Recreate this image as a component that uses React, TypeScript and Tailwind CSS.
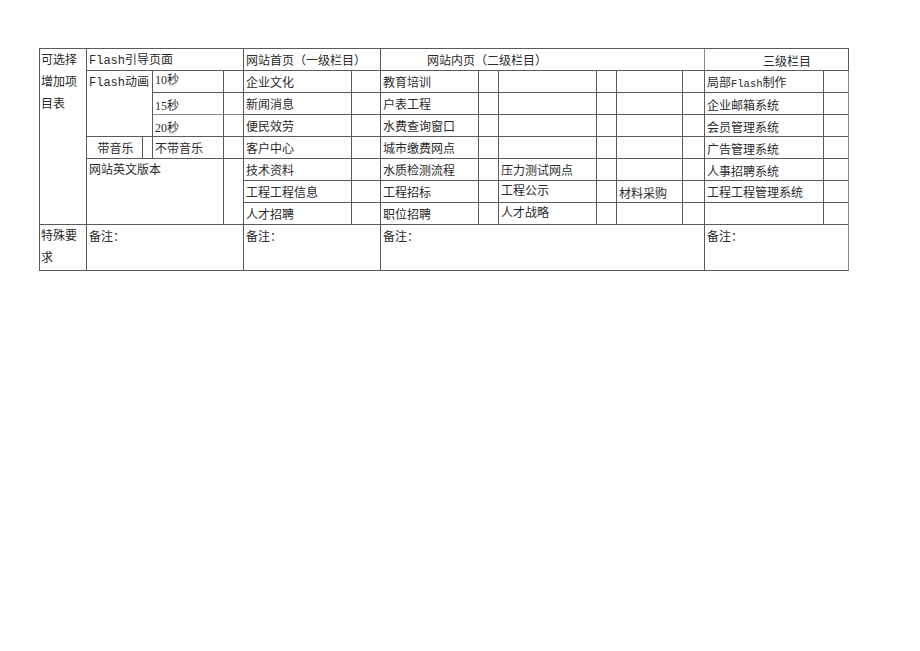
import React from "react";

const cols = ["col-[6/7]", "col-[7/8]", "col-[8/9]", "col-[9/10]", "col-[10/11]", "col-[11/12]", "col-[12/13]", "col-[13/14]", "col-[14/15]", "col-[15/16]"];
const rows = ["row-[2/3]", "row-[3/4]", "row-[4/5]", "row-[5/6]", "row-[6/7]", "row-[7/8]", "row-[8/9]"];

// five named columns per row, each followed by an empty narrow cell
const body: string[][] = [
  ["企业文化", "教育培训", "", "", "局部Flash制作"],
  ["新闻消息", "户表工程", "", "", "企业邮箱系统"],
  ["便民效劳", "水费查询窗口", "", "", "会员管理系统"],
  ["客户中心", "城市缴费网点", "", "", "广告管理系统"],
  ["技术资料", "水质检测流程", "压力测试网点", "", "人事招聘系统"],
  ["工程工程信息", "工程招标", "工程公示", "材料采购", "工程工程管理系统"],
  ["人才招聘", "职位招聘", "人才战略", "", ""],
];

function Flash({ small }: { small?: boolean }) {
  return <span className={`font-['Liberation_Mono',monospace] ${small ? "text-[10.5px]" : "text-[12px]"}`}>Flash</span>;
}

function label(t: string) {
  if (t.includes("Flash")) {
    const [a, b] = t.split("Flash");
    return (
      <>
        {a}
        <Flash small />
        {b}
      </>
    );
  }
  return t;
}

const cell = "border-r border-b border-[#5a5a5a] pl-[2px] overflow-hidden whitespace-nowrap";

export default function App() {
  return (
    <div className="w-[920px] h-[651px] bg-white pt-[48px] pl-[39px] font-['Liberation_Serif','Noto_Sans_CJK_SC',serif] text-[12px] text-[#2a2a2a]">
      <div className="grid grid-cols-[47px_56px_10px_71px_20px_108px_29px_98px_20px_98px_20px_66px_22px_119px_25px] grid-rows-[22px_22px_22px_22px_22px_22px_22px_22px_46px] w-fit border-l border-t border-[#5a5a5a]">
        {/* header */}
        <div className={`col-[1/2] row-[1/9] border-r border-b border-[#5a5a5a] pl-[1px] leading-[22px] whitespace-normal break-all`}>
          可选择
          <br />
          增加项
          <br />
          目表
        </div>
        <div className={`${cell} col-[2/6] row-[1/2] leading-[22px]`}>
          <Flash />
          引导页面
        </div>
        <div className={`${cell} col-[6/8] row-[1/2] leading-[24px]`}>网站首页（一级栏目）</div>
        <div className={`${cell} col-[8/14] row-[1/2] leading-[24px] pl-[46px] border-r-[#8a8a8a]`}>网站内页（二级栏目）</div>
        <div className={`${cell} col-[14/16] row-[1/2] leading-[26px] pl-[58px]`}>三级栏目</div>

        {/* flash block */}
        <div className={`${cell} col-[2/4] row-[2/5] leading-[20px] pt-[1px]`}>
          <Flash />
          动画
        </div>
        <div className={`${cell} col-[4/5] row-[2/3] leading-[18px]`}>10秒</div>
        <div className={`${cell} col-[5/6] row-[2/3]`}></div>
        <div className={`${cell} col-[4/5] row-[3/4] leading-[26px] border-b-[#8a8a8a]`}>15秒</div>
        <div className={`${cell} col-[5/6] row-[3/4] border-b-[#8a8a8a]`}></div>
        <div className={`${cell} col-[4/5] row-[4/5] leading-[26px]`}>20秒</div>
        <div className={`${cell} col-[5/6] row-[4/5]`}></div>
        <div className={`${cell} col-[2/3] row-[5/6] leading-[24px] text-center pl-0`}>带音乐</div>
        <div className={`${cell} col-[3/4] row-[5/6]`}></div>
        <div className={`${cell} col-[4/5] row-[5/6] leading-[24px]`}>不带音乐</div>
        <div className={`${cell} col-[5/6] row-[5/6]`}></div>
        <div className={`${cell} col-[2/5] row-[6/9] leading-[22px]`}>网站英文版本</div>
        <div className={`${cell} col-[5/6] row-[6/9]`}></div>

        {/* main body */}
        {body.map((r, ri) =>
          r.flatMap((t, ci) => [
            <div
              key={`${ri}-${ci}`}
              className={`${cell} ${cols[ci * 2]} ${rows[ri]} ${ri === 5 && ci === 3 ? "leading-[26px]" : ri >= 5 && ci === 2 ? "leading-[20px]" : ci === 4 && ri < 5 && ri > 0 ? "leading-[26px]" : "leading-[24px]"} ${ci === 0 ? "" : ""}`}
            >
              {label(t)}
            </div>,
            <div
              key={`${ri}-${ci}-e`}
              className={`${cell} ${cols[ci * 2 + 1]} ${rows[ri]} ${ci === 1 ? "" : ""} ${ci === 4 ? "border-r-[#8a8a8a]" : ""}`}
            ></div>,
          ])
        )}

        {/* remarks */}
        <div className={`col-[1/2] row-[9/10] border-r border-b border-[#5a5a5a] pl-[1px] leading-[22px] whitespace-normal break-all`}>特殊要求</div>
        <div className={`${cell} col-[2/6] row-[9/10] leading-[24px]`}>备注：</div>
        <div className={`${cell} col-[6/8] row-[9/10] leading-[24px]`}>备注：</div>
        <div className={`${cell} col-[8/14] row-[9/10] leading-[24px]`}>备注：</div>
        <div className={`${cell} col-[14/16] row-[9/10] leading-[24px] border-r-[#8a8a8a]`}>备注：</div>
      </div>
    </div>
  );
}
